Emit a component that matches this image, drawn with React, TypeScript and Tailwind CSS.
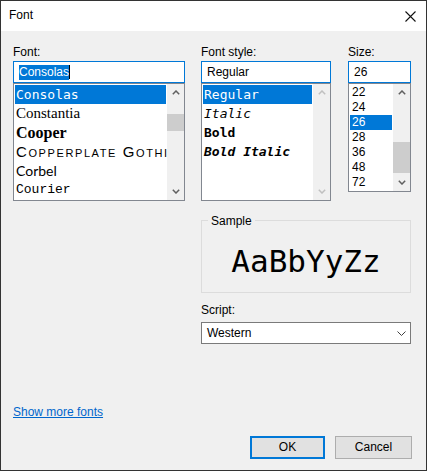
import React from 'react';

const Chevron = ({ up, light }: { up?: boolean; light?: boolean }) => (
  <svg width="8" height="5" viewBox="0 0 8 5">
    <path
      d={up ? 'M0.8 4.2 L4 1 L7.2 4.2' : 'M0.8 0.8 L4 4 L7.2 0.8'}
      fill="none"
      stroke={light ? '#c0c0c0' : '#606060'}
      strokeWidth="1.5"
    />
  </svg>
);

function ScrollBar({ thumb, disabled }: { thumb?: string; disabled?: boolean }) {
  return (
    <div className="w-[17px] h-full flex flex-col bg-[#f0f0f0] shrink-0">
      <div className="h-[17px] flex items-center justify-center shrink-0">
        <Chevron up light={disabled} />
      </div>
      <div className="flex-1 flex flex-col">
        {thumb && <div className={thumb + ' w-full bg-[#cdcdcd]'} />}
      </div>
      <div className="h-[17px] flex items-center justify-center shrink-0">
        <Chevron light={disabled} />
      </div>
    </div>
  );
}

const fonts = [
  { name: 'Consolas', cls: "font-['DejaVu_Sans_Mono'] text-[13px]" },
  { name: 'Constantia', cls: "font-['Liberation_Serif'] text-[15px]" },
  { name: 'Cooper', cls: "font-['Liberation_Serif'] font-black text-[16px]" },
  { name: 'Copperplate Gothic', cls: "font-['Liberation_Sans'] text-[15px] [font-variant:small-caps] tracking-[1.6px]" },
  { name: 'Corbel', cls: "font-['Lato'] text-[14px]" },
  { name: 'Courier', cls: "font-['Liberation_Mono'] text-[13px]" },
];

const styles = [
  { name: 'Regular', cls: '' },
  { name: 'Italic', cls: 'italic' },
  { name: 'Bold', cls: 'font-bold' },
  { name: 'Bold Italic', cls: 'font-bold italic' },
];

const sizes = ['22', '24', '26', '28', '36', '48', '72'];

export default function App() {
  return (
    <div className="w-[427px] h-[471px] border border-[#333333] bg-[#f0f0f0] flex flex-col font-['Liberation_Sans'] text-[12px] leading-[15px] text-black overflow-hidden">
      {/* Title bar */}
      <div className="h-[30px] bg-white flex items-start justify-between shrink-0">
        <span className="pl-[8px] pt-[7px]">Font</span>
        <div className="w-[30px] h-[30px] mr-[1px] flex items-center justify-center">
          <svg width="11" height="11" viewBox="0 0 11 11">
            <path d="M0.5 0.5 L10.5 10.5 M10.5 0.5 L0.5 10.5" stroke="#111" strokeWidth="1.1" />
          </svg>
        </div>
      </div>

      <div className="flex-1 flex flex-col pl-[12px] pt-[14px]">
        {/* Three lists */}
        <div className="flex">
          <div className="w-[172px] flex flex-col">
            <div className="h-[15px] mb-[1px]">Font:</div>
            <div className="h-[22px] border border-[#0078d7] bg-white pl-[5px] flex items-center">
              <span className="bg-[#0078d7] text-white">Consolas</span>
              <span className="w-[1px] h-[14px] bg-black" />
            </div>
            <div className="h-[118px] border border-[#828790] bg-white flex">
              <div className="flex-1 p-[1px] overflow-hidden">
                {fonts.map((f, i) => (
                  <div
                    key={f.name}
                    className={(i === 0 ? 'bg-[#0078d7] text-white ' : '') + 'h-[19px] leading-[19px] pl-[1px] whitespace-nowrap ' + f.cls}
                  >
                    {f.name}
                  </div>
                ))}
              </div>
              <ScrollBar thumb="mt-[13px] h-[17px]" />
            </div>
          </div>

          <div className="w-[130px] ml-[16px] flex flex-col">
            <div className="h-[15px] mb-[1px]">Font style:</div>
            <div className="h-[22px] border border-[#0078d7] bg-white pl-[5px] flex items-center">Regular</div>
            <div className="h-[118px] border border-[#828790] bg-white flex">
              <div className="flex-1 p-[1px] overflow-hidden">
                {styles.map((s, i) => (
                  <div
                    key={s.name}
                    className={(i === 0 ? 'bg-[#0078d7] text-white ' : '') + "h-[19px] leading-[19px] pl-[1px] whitespace-nowrap font-['DejaVu_Sans_Mono'] text-[13px] " + s.cls}
                  >
                    {s.name}
                  </div>
                ))}
              </div>
              <ScrollBar disabled />
            </div>
          </div>

          <div className="w-[63px] ml-[17px] flex flex-col">
            <div className="h-[15px] mb-[1px]">Size:</div>
            <div className="h-[22px] border border-[#0078d7] bg-white pl-[5px] flex items-center">26</div>
            <div className="h-[109px] border border-[#828790] bg-white flex">
              <div className="flex-1 p-[1px] overflow-hidden">
                {sizes.map((s) => (
                  <div
                    key={s}
                    className={(s === '26' ? 'bg-[#0078d7] text-white ' : '') + 'h-[15px] leading-[15px] pl-[2px]'}
                  >
                    {s}
                  </div>
                ))}
              </div>
              <ScrollBar thumb="mt-[41px] h-[31px]" />
            </div>
          </div>
        </div>

        {/* Sample + Script */}
        <div className="ml-[188px] w-[210px] flex flex-col">
          <div className="relative mt-[19px] h-[73px] border border-[#dcdcdc] text-center pt-[25px]">
            <span className="absolute left-[6px] top-[-7px] px-[3px] bg-[#f0f0f0]">Sample</span>
            <div className="font-['DejaVu_Sans_Mono'] text-[31px] leading-[31px]">AaBbYyZz</div>
          </div>
          <div className="mt-[10px] h-[15px]">Script:</div>
          <div className="mt-[4px] h-[22px] border border-[#7a7a7a] bg-white pl-[5px] pr-[4px] flex items-center justify-between">
            <span>Western</span>
            <svg width="9" height="5" viewBox="0 0 9 5">
              <path d="M0.5 0.5 L4.5 4.5 L8.5 0.5" fill="none" stroke="#404040" strokeWidth="1" />
            </svg>
          </div>
        </div>

        {/* Link */}
        <div className="mt-[61px] h-[15px]">
          <span className="text-[#0066cc] underline">Show more fonts</span>
        </div>

        {/* Buttons */}
        <div className="mt-[16px] flex justify-end gap-[10px] pr-[14px]">
          <button className="w-[75px] h-[23px] border-2 border-[#0078d7] bg-[#e1e1e1]">OK</button>
          <button className="w-[77px] h-[23px] border border-[#adadad] bg-[#e1e1e1]">Cancel</button>
        </div>
      </div>
    </div>
  );
}
